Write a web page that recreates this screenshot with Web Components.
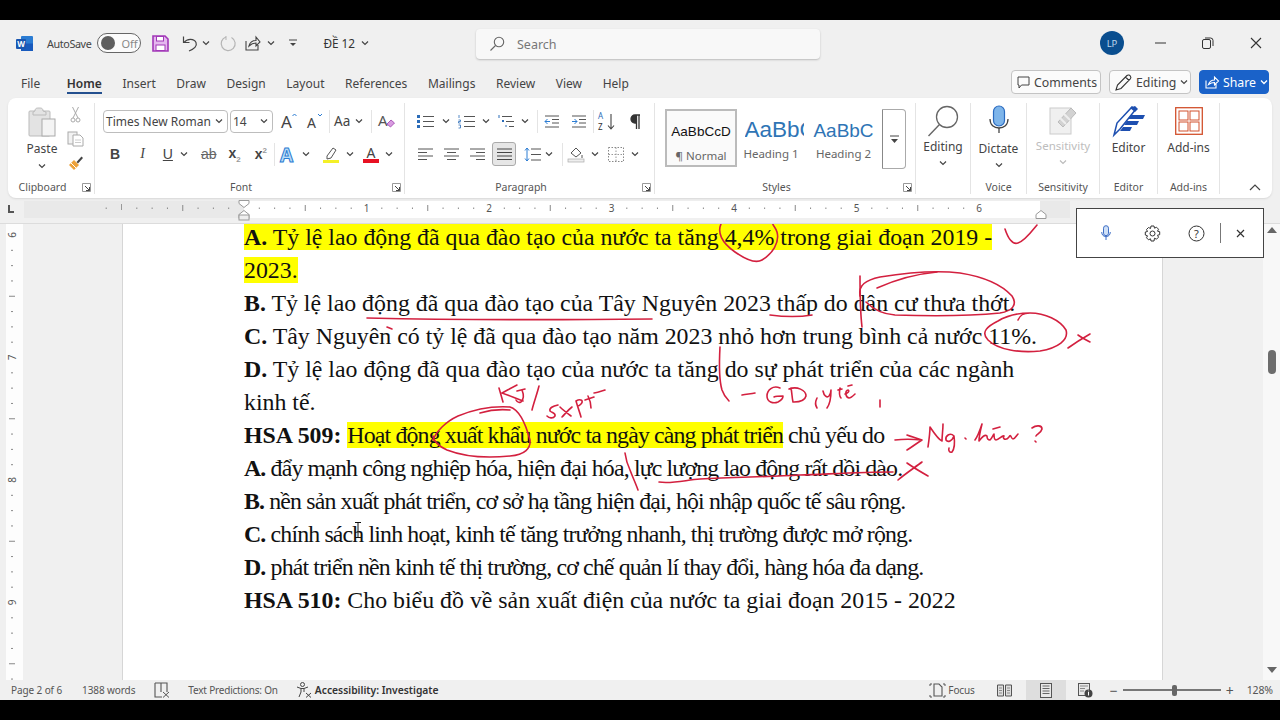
<!DOCTYPE html>
<html lang="vi">
<head>
<meta charset="utf-8">
<title>ĐỀ 12 - Word</title>
<style>
  html, body { margin: 0; height: 720px; overflow: hidden; background: #000; }
  body { padding: 20px 0; box-sizing: border-box; font-family: "Noto Sans", "Open Sans", sans-serif; }
  word-app { height: 680px; }
</style>
</head>
<body>
<word-app>
  <title-bar></title-bar>
  <tab-bar></tab-bar>
  <word-ribbon></word-ribbon>
  <h-ruler></h-ruler>
  <doc-view></doc-view>
  <status-bar></status-bar>
  <dictate-bar></dictate-bar>
</word-app>

<script>
// icons, drawn on their own pixel box
const ICONS = {
  chev: [8, 6, `<path d="M1 1.5 4 4.5 7 1.5" fill="none" stroke="#444" stroke-width="1.2"/>`],
  chevw: [8, 6, `<path d="M1 1.5 4 4.5 7 1.5" fill="none" stroke="#fff" stroke-width="1.3"/>`],
  chevg: [8, 6, `<path d="M1 1.5 4 4.5 7 1.5" fill="none" stroke="#bbb" stroke-width="1.2"/>`],
  word: [17, 17, `<rect x="5" y="1" width="12" height="15" rx="1" fill="#2b7cd3"/><rect x="5" y="8.5" width="12" height="7.5" fill="#185abd"/><rect x="0" y="4" width="10" height="10" rx="1" fill="#1a56b0"/><text x="5" y="12" font-size="8" font-weight="700" fill="#fff" text-anchor="middle" font-family="Noto Sans">W</text>`],
  save: [17, 17, `<path d="M1 1h12l3 3v12H1z" fill="#e4b8ee" stroke="#a238b8" stroke-width="1.6"/><rect x="4.5" y="1.5" width="7" height="4.5" fill="#fff" stroke="#a238b8"/><rect x="4" y="10" width="9" height="5.5" fill="#fff" stroke="#a238b8"/>`],
  undo: [16, 17, `<path d="M1.5 1.5v6h6M2 7.5C5 3.5 12 3 14 7.5 15.500 11 12 14 7 16" fill="none" stroke="#444" stroke-width="1.2"/>`],
  redo: [16, 17, `<path d="M11.500 2.500A7 7 0 1 1 6 2" fill="none" stroke="#b5b5b5" stroke-width="1.2"/><path d="M6 1v4" stroke="#b5b5b5"/>`],
  share: [16, 16, `<path d="M1 6v9h12v-5M4 11C5 7 8 5.500 11 5.500V2l4 5-4 4V8C8 8 6 9 4 11z" fill="none" stroke="#444" stroke-width="1.1"/>`],
  customize: [10, 8, `<path d="M1 1h8" stroke="#444"/><path d="M2 4h6L5 7z" fill="#444"/>`],
  search: [16, 16, `<circle cx="10" cy="6" r="4.700" fill="none" stroke="#666" stroke-width="1.1"/><path d="M6.500 9.500 1.500 14.500" stroke="#666" stroke-width="1.1"/>`],
  min: [12, 4, `<path d="M0 2h11" stroke="#333" stroke-width="1"/>`],
  restore: [12, 12, `<rect x=".5" y="2.500" width="8" height="9" rx="1.500" fill="none" stroke="#333"/><path d="M3 1h5.500a2.500 2.500 0 0 1 2.500 2.500V9" fill="none" stroke="#333"/>`],
  close: [12, 12, `<path d="M1 1l10 10M11 1 1 11" stroke="#333" stroke-width="1.1"/>`],
  comment: [13, 13, `<path d="M1 1h11v8H4.500L2 12V9H1z" fill="none" stroke="#444" stroke-width="1"/>`],
  pencil: [17, 17, `<path d="M1 16l1.500-5L12 1.500c1-1 2.500-.5 3.200.3.700.8 1 2 .1 3L6 14.500z M10.500 3l3.500 3.500" fill="none" stroke="#333" stroke-width="1.100"/>`],
  sharew: [14, 14, `<path d="M1 5.500V13h10V9M3.500 9.500C4.500 6.500 7 5 9.500 5V2l4 4-4 4V7.500c-2.500 0-4 .5-6 2z" fill="none" stroke="#fff" stroke-width="1.100"/>`],
  paste: [28, 30, `<rect x="1" y="4" width="21" height="25" rx="1" fill="#e3e3e3" stroke="#bbb"/><path d="M7 4c0-3 2-3 4-3s4 0 4 3l3 1v3H5V5z" fill="#e3e3e3" stroke="#bbb"/><rect x="14" y="12" width="13" height="17" fill="#f4f4f4" stroke="#aaa"/>`],
  cut: [11, 17, `<path d="M2.500 1 8 12M8.500 1 3 12" stroke="#aaa" fill="none"/><circle cx="3" cy="14" r="2" fill="none" stroke="#aaa"/><circle cx="8" cy="14" r="2" fill="none" stroke="#aaa"/>`],
  copy: [17, 16, `<rect x="1" y="1" width="9" height="12" fill="#f2f2f2" stroke="#aaa"/><path d="M6 4h7l3 3v8H6z" fill="#fff" stroke="#aaa"/><path d="M8 9h6M8 11.500h6" stroke="#ccc"/>`],
  painter: [16, 16, `<path d="M1 10l5-5 5 5-5 5z" fill="#eda23a"/><path d="M3 8l5 5" stroke="#fff"/><path d="M8.500 7 13.500 1.500l1.500 1.500-5 5.500z" fill="#444"/>`],
  launch: [9, 9, `<path d="M.5.5h8v8h-8z" fill="none" stroke="#999"/><path d="M3 3l4.500 4.500M7.500 4v3.500H4" fill="none" stroke="#444"/>`],
  grow: [16, 16, `<text x="0" y="15" font-size="17" fill="#444" font-family="Noto Sans">A</text><path d="M11.500 3 13.500 1 15.500 3" fill="none" stroke="#2b7cd3"/>`],
  shrink: [16, 16, `<text x="0" y="15" font-size="14" fill="#444" font-family="Noto Sans">A</text><path d="M11 1l2 2 2-2" fill="none" stroke="#2b7cd3"/>`],
  clearf: [17, 16, `<text x="0" y="13" font-size="15" fill="#555" font-family="Noto Sans">A</text><path d="M9 11l4-4 3.500 3-4 4z" fill="#d89be0" stroke="#9b3fa9" stroke-width=".8"/>`],
  texta: [17, 17, `<text x="8.500" y="15.500" text-anchor="middle" font-size="19" font-weight="700" fill="#bcdcf6" stroke="#2b7cd3" stroke-width="1" font-family="Noto Sans">A</text>`],
  hilite: [18, 17, `<path d="M5 10l6-8 3 2-5 8-4 1z" fill="#fff" stroke="#555"/><rect x="1" y="14" width="16" height="3" fill="#f4f028"/>`],
  fontc: [16, 17, `<text x="8" y="12" text-anchor="middle" font-size="14" fill="#444" font-family="Noto Sans">A</text><rect x="0" y="13" width="16" height="4" fill="#e81123"/>`],
  bullets: [17, 15, `<rect x="0" y="1" width="3" height="3" fill="#2b6cb8"/><rect x="0" y="6" width="3" height="3" fill="#2b6cb8"/><rect x="0" y="11" width="3" height="3" fill="#2b6cb8"/><path d="M6 2.500h11M6 7.500h11M6 12.500h11" stroke="#555"/>`],
  number: [17, 15, `<path d="M1 1v3M.5 6h2v1.500h-2V9h2M.5 11h2v3h-2" fill="none" stroke="#2b6cb8" stroke-width=".8"/><path d="M6 2.500h11M6 7.500h11M6 12.500h11" stroke="#555"/>`],
  multi: [17, 15, `<path d="M1 1v3" stroke="#2b6cb8"/><rect x="4" y="6" width="2" height="2" fill="#2b6cb8"/><path d="M8 13v-2" stroke="#2b6cb8"/><path d="M4 2.500h10M8 7.500h8M11 12.500h5" stroke="#555"/>`],
  outdent: [16, 13, `<path d="M1 1h14M8 4.500h7M8 8h7M1 12h14" stroke="#555"/><path d="M6 6.500H1M3.500 4 1 6.500 3.500 9" fill="none" stroke="#2b7cd3"/>`],
  indent: [16, 13, `<path d="M1 1h14M8 4.500h7M8 8h7M1 12h14" stroke="#555"/><path d="M1 6.500h5M3.500 4 6 6.500 3.500 9" fill="none" stroke="#2b7cd3"/>`],
  sort: [17, 17, `<text x="0" y="6" font-size="8" fill="#2b6cb8" font-family="Noto Sans">A</text><text x="0" y="17" font-size="8" fill="#333" font-family="Noto Sans">Z</text><path d="M13 1v15M10 12.500l3 3.500 3-3.500" fill="none" stroke="#444" stroke-width="1.1"/>`],
  pilcrow: [11, 15, `<path d="M10 1H5a3.500 3.500 0 0 0 0 8h1.500V1M9 1v14M6.500 9v6" fill="#333" stroke="#333" stroke-width="1.300"/>`],
  left: [15, 13, `<path d="M0 1h15M0 4.500h9M0 8h15M0 11.500h9" stroke="#555"/>`],
  center: [15, 13, `<path d="M0 1h15M3 4.500h9M0 8h15M3 11.500h9" stroke="#555"/>`],
  right: [15, 13, `<path d="M0 1h15M6 4.500h9M0 8h15M6 11.500h9" stroke="#555"/>`],
  justify: [15, 13, `<path d="M0 1h15M0 4.500h15M0 8h15M0 11.500h15" stroke="#444"/>`],
  spacing: [17, 15, `<path d="M3 1v13M1 3.500 3 1l2 2.500M1 11.500 3 14l2-2.500" fill="none" stroke="#2b7cd3"/><path d="M7 2h10M7 7.500h10M7 13h10" stroke="#555"/>`],
  shade: [17, 16, `<path d="M3 7l5-5 5 5-5 4z" fill="#fff" stroke="#555"/><path d="M14 9v3" stroke="#555"/><rect x="0" y="13" width="16" height="3" fill="#eee" stroke="#aaa" stroke-width=".7"/>`],
  border: [16, 15, `<rect x=".5" y=".5" width="15" height="14" fill="none" stroke="#888" stroke-dasharray="1.500 1.500"/><path d="M8 .5v14M.5 7.500h15" stroke="#999" stroke-dasharray="1.500 1.500"/>`],
  gscroll: [9, 9, `<path d="M0 1h9" stroke="#444"/><path d="M1 4h7L4.500 8z" fill="#444"/>`],
  bigsearch: [32, 32, `<circle cx="20" cy="12" r="10.500" fill="#fff" stroke="#666" stroke-width="1.300"/><path d="M12.500 19.500 1.500 31" stroke="#666" stroke-width="1.400"/>`],
  mic: [20, 30, `<path d="M1 14c0 6 4 9 9 9s9-3 9-9" fill="none" stroke="#444" stroke-width="1.300"/><rect x="4.500" y="1" width="11" height="20" rx="5.500" fill="#7eb5ea" stroke="#2a6bc0" stroke-width="1.200"/><path d="M10 23v5" stroke="#444" stroke-width="1.300"/>`],
  sens: [28, 30, `<rect x="1" y="3" width="21" height="26" fill="#f0f0f0" stroke="#ccc"/><path d="M9 17 22 3l5 5-13 14z" fill="#d2d2d2" stroke="#bbb"/><path d="M11 13l6 6M15 9l6 6" stroke="#eee" stroke-width="2"/>`],
  editor: [32, 31, `<path d="M1 30 4 18 19 2l4 2L7 24z" fill="#fff" stroke="#1d4fb0" stroke-width="1.500"/><path d="M17 3 22 1l3 3-3 3z" fill="#1d4fb0"/><path d="M18 10h14l-2 4H15zM14 16h12l-2 4H11zM10 22h9l-2 4H7z" fill="#1d4fb0"/>`],
  addins: [28, 28, `<rect x=".7" y=".7" width="26.600" height="26.600" fill="#fff" stroke="#d2512d" stroke-width="1.300"/><rect x="4" y="4" width="9" height="9" fill="none" stroke="#d2512d"/><rect x="15" y="4" width="9" height="9" fill="none" stroke="#d2512d"/><rect x="4" y="15" width="9" height="9" fill="none" stroke="#d2512d"/><rect x="15" y="15" width="9" height="9" fill="none" stroke="#d2512d"/>`],
  collapse: [12, 7, `<path d="M1 6 6 1l5 5" fill="none" stroke="#444" stroke-width="1.200"/>`],
  proof: [16, 16, `<path d="M1 1h12v9M1 1v14h7M7 1v9" fill="none" stroke="#555" stroke-width="1.100"/><path d="M9 10l6 5.500M15 10l-6 5.500" stroke="#555"/>`],
  access: [16, 16, `<circle cx="6.500" cy="2.500" r="2" fill="none" stroke="#444"/><path d="M1 5l4 1.500h3L12 5M5 6.500V10L3 15M8 6.500V10" fill="none" stroke="#444"/><path d="M10 11l5 4.500M15 11l-5 4.500" stroke="#444"/>`],
  focus: [15, 15, `<path d="M0 3V1h2M13 1h2v2M0 12v2h2M13 14h2v-2" fill="none" stroke="#555"/><path d="M4 1h5l3 3v9H4z" fill="none" stroke="#555" stroke-width="1.100"/>`],
  read: [15, 13, `<path d="M.5 1h6v11h-6zM8.500 1h6v11h-6z" fill="#ddd" stroke="#555"/><path d="M2 4h3M2 6.500h3M2 9h3M10 4h3M10 6.500h3M10 9h3" stroke="#666" stroke-width=".7"/>`],
  print: [12, 15, `<rect x=".5" y=".5" width="11" height="14" fill="#e8e8e8" stroke="#555"/><path d="M2.500 3h7M2.500 5.500h7M2.500 8h7M2.500 10.500h7" stroke="#666"/>`],
  web: [15, 15, `<rect x=".5" y=".5" width="11" height="12" fill="#e8e8e8" stroke="#555"/><path d="M2 3h8M2 5.500h5M2 8h4" stroke="#888"/><circle cx="10.500" cy="10.500" r="4" fill="#444"/><path d="M10.500 9v3.500M10.500 7.700v.6" stroke="#fff"/>`],
  micb: [10, 16, `<rect x="2.500" y=".7" width="5" height="10" rx="2.500" fill="#cfe0f7" stroke="#3f6fc6"/><path d="M.7 7c0 3 2 4.700 4.300 4.700S9.300 10 9.300 7M5 11.700V15" fill="none" stroke="#3f6fc6"/>`],
  gear: [17, 17, `<circle cx="8.500" cy="8.500" r="2.500" fill="none" stroke="#333"/><path d="M7 1h3l.5 2.200 2-1 2 2-1 2 2.200.5v3l-2.200.5 1 2-2 2-2-1L10 16H7l-.5-2.200-2 1-2-2 1-2L1.300 10V7l2.200-.5-1-2 2-2 2 1z" fill="none" stroke="#333"/>`],
  help: [17, 17, `<circle cx="8.500" cy="8.500" r="7.500" fill="none" stroke="#333"/><text x="8.500" y="12.500" text-anchor="middle" font-size="11" fill="#333" font-family="Noto Sans">?</text>`],
  xs: [9, 9, `<path d="M1 1l7 7M8 1 1 8" stroke="#333" stroke-width="1.200"/>`],
  ibeam: [8, 16, `<path d="M1 .5h6M4 .5v15M1 15.500h6" stroke="#111"/>`]
};

class UiIcon extends HTMLElement {
  connectedCallback() {
    let [w, h, body] = ICONS[this.getAttribute('name')];
    this.attachShadow({mode: 'open'}).innerHTML = `
      <style>:host { display: inline-flex; flex: none; } svg { display: block; overflow: visible; }</style>
      <svg width="${w}" height="${h}" viewBox="0 0 ${w} ${h}">${body}</svg>`;
  }
}
customElements.define('ui-icon', UiIcon);

class WordApp extends HTMLElement {
  constructor() {
    super();
    this.attachShadow({mode: 'open'}).innerHTML = `
      <style>
        :host { display: flex; flex-direction: column; position: relative; background: #f0f0f0; color: #444; overflow: hidden; }
      </style>
      <slot></slot>`;
  }
}
customElements.define('word-app', WordApp);

class TitleBar extends HTMLElement {
  constructor() {
    super();
    this.attachShadow({mode: 'open'}).innerHTML = `
      <style>
        :host { display: flex; height: 46px; flex: none; align-items: center; font-size: 10.800px; letter-spacing: -.4px; color: #444; }
        .toggle { width: 42px; height: 18px; border: 1px solid #666; border-radius: 11px; display: flex; align-items: center; margin-left: 6px; background: #fbfbfb; color: #888; font-size: 11px; letter-spacing: 0; }
        .knob { width: 14px; height: 14px; border-radius: 50%; background: #5f5f5f; margin: 0 6px 0 3px; }
        .name { font-size: 11.800px; letter-spacing: 0; color: #333; }
        .search { width: 344px; height: 30px; box-sizing: border-box; background: #f8f8f8; border-radius: 4px; box-shadow: 0 1px 2px #bbb; display: flex; align-items: center; padding-left: 13px; color: #777; font-size: 12.500px; letter-spacing: 0; position: absolute; left: 476px; top: 9px; }
        .search span { margin-left: 12px; }
        .avatar { width: 24px; height: 24px; border-radius: 50%; background: #0a4e8f; color: #b9d3ea; font-size: 9.500px; letter-spacing: 0; display: flex; align-items: center; justify-content: center; }
        .spacer { flex: 1; }
      </style>
      <ui-icon name="word" style="margin-left:16px"></ui-icon>
      <span style="margin-left:14px">AutoSave</span>
      <div class="toggle"><div class="knob"></div>Off</div>
      <ui-icon name="save" style="margin-left:11px"></ui-icon>
      <ui-icon name="undo" style="margin-left:13px"></ui-icon>
      <ui-icon name="chev" style="margin-left:4px"></ui-icon>
      <ui-icon name="redo" style="margin-left:10px"></ui-icon>
      <ui-icon name="share" style="margin-left:9px"></ui-icon>
      <ui-icon name="chev" style="margin-left:6px"></ui-icon>
      <ui-icon name="customize" style="margin-left:13px"></ui-icon>
      <span class="name" style="margin-left:25px">ĐỀ 12</span>
      <ui-icon name="chev" style="margin-left:6px"></ui-icon>
      <div class="search"><ui-icon name="search"></ui-icon><span>Search</span></div>
      <div class="spacer"></div>
      <div class="avatar">LP</div>
      <ui-icon name="min" style="margin-left:31px"></ui-icon>
      <ui-icon name="restore" style="margin-left:35px"></ui-icon>
      <ui-icon name="close" style="margin-left:36px;margin-right:18px"></ui-icon>`;
  }
}
customElements.define('title-bar', TitleBar);

class TabBar extends HTMLElement {
  constructor() {
    super();
    this.attachShadow({mode: 'open'}).innerHTML = `
      <style>
        :host { display: flex; height: 32px; flex: none; align-items: center; padding-left: 21px; font-size: 12px; color: #444; position: relative; }
        .tabs { display: flex; gap: 20.600px; flex: 1; padding-top: 2px; }
        .on { font-weight: 600; color: #333; position: relative; margin-left: 6px; }
        .on::after { content: ""; position: absolute; left: 0; right: 0; bottom: -2px; height: 2px; background: #24508f; }
        .btn { height: 24px; box-sizing: border-box; border: 1px solid #c4c4c4; border-radius: 4px; background: #fbfbfb; display: flex; align-items: center; gap: 4px; padding: 0 5px; color: #444; font-size: 12.300px; }
        .share { background: #1a62c9; border-color: #1a62c9; color: #fff; }
      </style>
      <div class="tabs">
        <span>File</span><span class="on">Home</span><span>Insert</span><span>Draw</span><span>Design</span><span>Layout</span><span>References</span><span>Mailings</span><span>Review</span><span>View</span><span>Help</span>
      </div>
      <div class="btn" style="width:90px;margin-right:8px"><ui-icon name="comment"></ui-icon>Comments</div>
      <div class="btn" style="width:82px;margin-right:8px"><ui-icon name="pencil"></ui-icon>Editing<ui-icon name="chev"></ui-icon></div>
      <div class="btn share" style="width:70px;margin-right:11px"><ui-icon name="sharew"></ui-icon>Share<ui-icon name="chevw"></ui-icon></div>`;
  }
}
customElements.define('tab-bar', TabBar);

class RibbonGroup extends HTMLElement {
  constructor() {
    super();
    this.attachShadow({mode: 'open'}).innerHTML = `
      <style>
        :host { display: flex; flex-direction: column; flex: none; box-sizing: border-box; border-right: 1px solid #e4e4e4; margin: 5px 0 4px; position: relative; }
        .body { flex: 1; min-height: 0; display: flex; }
        .foot { height: 14px; display: flex; align-items: center; font-size: 10.500px; color: #555; }
        #lb { flex: 1; text-align: center; }
        .launch { width: 17px; display: flex; flex: none; justify-content: flex-end; padding-right: 3px; box-sizing: border-box; }
      </style>
      <div class="body"><slot></slot></div>
      <div class="foot"><span id="lb"></span><span class="launch" id="lc"></span></div>`;
  }
  connectedCallback() {
    let root = this.shadowRoot;
    root.getElementById('lb').textContent = this.getAttribute('label') || '';
    if (this.hasAttribute('launcher')) {
      root.getElementById('lc').innerHTML = '<ui-icon name="launch"></ui-icon>';
    } else {
      root.getElementById('lc').style.display = 'none';
    }
  }
}
customElements.define('ribbon-group', RibbonGroup);

class BigButton extends HTMLElement {
  constructor() {
    super();
    this.attachShadow({mode: 'open'}).innerHTML = `
      <style>
        :host { display: flex; flex: 1; flex-direction: column; align-items: center; font-size: 12px; color: #444; }
        .ic { display: flex; align-items: center; justify-content: center; }
        .t { line-height: 16px; white-space: nowrap; }
        :host([dim]) { color: #bdbdbd; font-size: 11.500px; }
      </style>
      <div class="ic"><slot></slot></div>
      <div class="t" id="t"></div>
      <div id="c" style="display:flex;margin-top:5px"></div>`;
  }
  connectedCallback() {
    let root = this.shadowRoot;
    root.getElementById('t').textContent = this.getAttribute('text');
    root.getElementById('t').style.marginTop = (this.getAttribute('gap') || 3) + 'px';
    if (this.hasAttribute('chev')) {
      let kind = this.hasAttribute('dim') ? 'chevg' : 'chev';
      root.getElementById('c').innerHTML = `<ui-icon name="${kind}"></ui-icon>`;
    }
    this.style.paddingTop = (this.getAttribute('top') || 2) + 'px';
  }
}
customElements.define('big-button', BigButton);

class ToolRow extends HTMLElement {
  constructor() {
    super();
    this.attachShadow({mode: 'open'}).innerHTML = `
      <style>
        :host { display: flex; align-items: center; height: 24px; color: #444; }
      </style>
      <slot></slot>`;
  }
}
customElements.define('tool-row', ToolRow);

class FontSelect extends HTMLElement {
  constructor() {
    super();
    this.attachShadow({mode: 'open'}).innerHTML = `
      <style>
        :host { display: flex; align-items: center; height: 23px; box-sizing: border-box; border: 1px solid #bdbdbd; border-radius: 4px; padding: 0 4px 0 2px; font-size: 12px; color: #444; font-family: "Noto Sans", sans-serif; justify-content: space-between; background: #fff; }
      </style>
      <slot></slot><ui-icon name="chev"></ui-icon>`;
  }
}
customElements.define('font-select', FontSelect);

class StyleGallery extends HTMLElement {
  constructor() {
    super();
    this.attachShadow({mode: 'open'}).innerHTML = `
      <style>
        :host { display: flex; width: 241px; height: 60px; box-sizing: border-box; margin: 6px 0 0 10px; }
        .cells { display: flex; width: 217px; }
        .cell { display: flex; flex-direction: column; align-items: center; height: 58px; box-sizing: border-box; padding-top: 6px; overflow: hidden; white-space: nowrap; }
        .n { width: 72px; border: 2px solid #bbb; background: #fafafa; }
        .s { height: 28px; line-height: 28px; color: #2e74b5; font-family: "Liberation Sans", sans-serif; }
        .l { font-size: 11.500px; color: #666; line-height: 18px; margin-top: 2px; }
        .more { width: 24px; height: 60px; box-sizing: border-box; border: 1px solid #aaa; border-left: 1px solid #888; border-radius: 0 4px 4px 0; display: flex; align-items: center; justify-content: center; }
      </style>
      <div class="cells">
        <div class="cell n"><div class="s" style="color:#111;font-size:13.500px;margin-top:1px;height:27px">AaBbCcD</div><div class="l">¶ Normal</div></div>
        <div class="cell" style="width:68px"><div class="s" style="font-size:22.500px;margin:3px 0 0 6px;height:25px;width:59px;overflow:hidden;line-height:24px">AaBbC</div><div class="l">Heading 1</div></div>
        <div class="cell" style="width:77px"><div class="s" style="font-size:19px;margin-top:3px;height:25px;line-height:25px">AaBbC</div><div class="l">Heading 2</div></div>
      </div>
      <div class="more"><ui-icon name="gscroll"></ui-icon></div>`;
  }
}
customElements.define('style-gallery', StyleGallery);

class WordRibbon extends HTMLElement {
  constructor() {
    super();
    // small tools use inline margins so the x positions line up with the reference
    const tool = (name, ml) => `<ui-icon name="${name}" style="margin-left:${ml}px"></ui-icon>`;
    const txt = (s, ml, extra) => `<span style="margin-left:${ml}px;${extra||''}">${s}</span>`;
    this.attachShadow({mode: 'open'}).innerHTML = `
      <style>
        :host { display: flex; flex: none; height: 100px; margin: 0 8px; background: #fff; border-radius: 8px; box-shadow: 0 1px 2px #d8d8d8; position: relative; box-sizing: border-box; }
        .two { display: flex; flex-direction: column; gap: 9px; padding-top: 6px; }
        .sep { width: 1px; height: 23px; background: #e4e4e4; }
        .sm { display: flex; flex-direction: column; align-items: center; gap: 8px; }
        .pasteb { width: 50px; margin-left: 9px; display: flex; flex-direction: column; align-items: center; font-size: 12px; color: #444; padding-top: 4px; }
        .jbox { width: 24px; height: 24px; box-sizing: border-box; background: #e6e6e6; border: 1px solid #aaa; border-radius: 3px; display: flex; align-items: center; justify-content: center; }
        .collapse { position: absolute; right: 11px; bottom: 7px; display: flex; }
      </style>
      <ribbon-group label="Clipboard" launcher style="width:87px">
        <div class="pasteb"><ui-icon name="paste"></ui-icon><span style="margin-top:3px">Paste</span><ui-icon name="chev" style="margin-top:6px"></ui-icon></div>
        <div class="sm" style="margin-left:0;width:17px;padding-top:3px"><ui-icon name="cut"></ui-icon><ui-icon name="copy"></ui-icon><ui-icon name="painter"></ui-icon></div>
      </ribbon-group>

      <ribbon-group label="Font" launcher style="width:310px">
        <div class="two">
          <tool-row>
            <font-select style="width:125px;margin-left:8px">Times New Roman</font-select>
            <font-select style="width:43px;margin-left:2px">14</font-select>
            ${tool('grow',8)}${tool('shrink',10)}
            <div class="sep" style="margin-left:6px"></div>
            ${txt('Aa',4,'font-size:13.500px')}${tool('chev',5)}
            <div class="sep" style="margin-left:8px"></div>
            ${tool('clearf',6)}
          </tool-row>
          <tool-row style="font-family:'Liberation Sans',sans-serif;font-size:14px;color:#444">
            ${txt('B',15,'font-weight:700')}
            ${txt('I',20,'font-family:Liberation Serif;font-style:italic')}
            ${txt('U',18,'text-decoration:underline')}
            ${tool('chev',7)}
            ${txt('ab',13,'text-decoration:line-through;color:#666')}
            ${txt('x<sub style="font-size:8px;color:#999">2</sub>',12,'font-weight:600')}
            ${txt('x<sup style="font-size:8px;color:#999;line-height:0">2</sup>',14,'font-weight:600')}
            <div class="sep" style="margin-left:7px"></div>
            ${tool('texta',3)}${tool('chev',7)}
            ${tool('hilite',12)}${tool('chev',6)}
            ${tool('fontc',9)}${tool('chev',6)}
          </tool-row>
        </div>
      </ribbon-group>

      <ribbon-group label="Paragraph" launcher style="width:250px">
        <div class="two">
          <tool-row>
            ${tool('bullets',12)}${tool('chev',8)}${tool('number',8)}${tool('chev',7)}${tool('multi',8)}${tool('chev',6)}
            <div class="sep" style="margin-left:8px"></div>
            ${tool('outdent',6)}${tool('indent',11)}
            <div class="sep" style="margin-left:6px"></div>
            ${tool('sort',4)}${tool('pilcrow',15)}
          </tool-row>
          <tool-row>
            ${tool('left',13)}${tool('center',11)}${tool('right',11)}
            <div class="jbox" style="margin-left:7px"><ui-icon name="justify"></ui-icon></div>
            ${tool('spacing',8)}${tool('chev',4)}
            <div class="sep" style="margin-left:9px"></div>
            ${tool('shade',5)}${tool('chev',6)}${tool('border',9)}${tool('chev',7)}
          </tool-row>
        </div>
      </ribbon-group>

      <ribbon-group label="Styles" launcher style="width:261px">
        <style-gallery></style-gallery>
      </ribbon-group>

      <ribbon-group style="width:55px">
        <big-button text="Editing" chev gap="2"><ui-icon name="bigsearch"></ui-icon></big-button>
      </ribbon-group>
      <ribbon-group label="Voice" style="width:56px">
        <big-button text="Dictate" chev gap="6"><ui-icon name="mic"></ui-icon></big-button>
      </ribbon-group>
      <ribbon-group label="Sensitivity" style="width:73px">
        <big-button text="Sensitivity" dim chev gap="3"><ui-icon name="sens"></ui-icon></big-button>
      </ribbon-group>
      <ribbon-group label="Editor" style="width:58px">
        <big-button text="Editor" gap="4"><ui-icon name="editor"></ui-icon></big-button>
      </ribbon-group>
      <ribbon-group label="Add-ins" style="width:62px">
        <big-button text="Add-ins" gap="5" top="4"><ui-icon name="addins"></ui-icon></big-button>
      </ribbon-group>
      <div class="collapse"><ui-icon name="collapse"></ui-icon></div>`;
  }
}
customElements.define('word-ribbon', WordRibbon);

const INCH = 122.5;

class HRuler extends HTMLElement {
  constructor() {
    super();
    let marks = '';
    for (let i = -9; i <= 48; i++) {
      let x = 244 + i * INCH / 8;
      if (i % 8 === 0) {
        if (i > 0) marks += `<text x="${x}" y="14" font-size="10" fill="#555" text-anchor="middle" font-family="Noto Sans">${i / 8}</text>`;
        else if (i < 0) marks += `<path d="M${x} 6v6" stroke="#999"/>`;
      } else if (i % 4 === 0) {
        marks += `<path d="M${x} 7v6" stroke="#888"/>`;
      } else {
        marks += `<path d="M${x} 9.500v1.500" stroke="#888"/>`;
      }
    }
    this.attachShadow({mode: 'open'}).innerHTML = `
      <style>
        :host { display: block; height: 26px; flex: none; background: #f0f0f0; border-bottom: 1px solid #dcdcdc; box-sizing: border-box; }
        svg { display: block; }
      </style>
      <svg width="1280" height="25" viewBox="0 0 1280 25">
        <path d="M8 7h2v6h4v2H8z" fill="#555"/>
        <rect x="24" y="3" width="1046" height="17" fill="#e9e9e9"/>
        <rect x="244" y="3" width="796" height="17" fill="#fff"/>
        ${marks}
        <path d="M239 2.500h10v3l-5 4-5-4z" fill="#fff" stroke="#999"/>
        <path d="M239 20.500v-4l5-4 5 4v4z" fill="#fff" stroke="#999"/>
        <rect x="239" y="17" width="10" height="5" fill="#eee" stroke="#999"/>
        <path d="M1036 20.500v-4l5-4 5 4v4z" fill="#fff" stroke="#999"/>
      </svg>`;
  }
}
customElements.define('h-ruler', HRuler);

class VRuler extends HTMLElement {
  constructor() {
    super();
    let marks = '';
    // inch 6 sits at y 234 in the window, the doc view starts at 224
    for (let i = -1; i < 32; i++) {
      let y = 11 + i * INCH / 8;
      if (y < 0 || y > 456) continue;
      if (i % 8 === 0) {
        marks += `<text transform="translate(16,${y}) rotate(-90)" font-size="10" fill="#555" text-anchor="middle" font-family="Noto Sans">${6 + i / 8}</text>`;
      } else if (i % 4 === 0) {
        marks += `<path d="M9 ${y}h6" stroke="#888"/>`;
      } else {
        marks += `<path d="M11 ${y}h2" stroke="#888"/>`;
      }
    }
    this.attachShadow({mode: 'open'}).innerHTML = `
      <style>
        :host { display: block; width: 24px; flex: none; background: #f0f0f0; }
        svg { display: block; }
      </style>
      <svg width="24" height="456" viewBox="0 0 24 456">
        <rect x="6" y="0" width="17" height="456" fill="#fdfdfd"/>
        ${marks}
      </svg>`;
  }
}
customElements.define('v-ruler', VRuler);

class DocPage extends HTMLElement {
  constructor() {
    super();
    this.attachShadow({mode: 'open'}).innerHTML = `
      <style>
        :host { display: block; width: 1041px; flex: none; background: #fff; box-sizing: border-box; border-left: 1px solid #d6d6d6; border-right: 1px solid #d6d6d6; padding-left: 121px; font: 23.850px/33px "Liberation Serif", "Times New Roman", serif; color: #111; overflow: hidden; }
        .txt { margin-top: -3px; }
        p { margin: 0; white-space: nowrap; height: 33px; }
        mark { background: #ffff00; color: inherit; }
        .t { letter-spacing: -.85px; }
      </style>
      <div class="txt">
        <p><mark><b>A.</b> Tỷ lệ lao động đã qua đào tạo của nước ta tăng 4,4% trong giai đoạn 2019 -</mark></p>
        <p><mark>2023.</mark></p>
        <p><b>B.</b> Tỷ lệ lao động đã qua đào tạo của Tây Nguyên 2023 thấp do dân cư thưa thớt.</p>
        <p><b>C.</b> Tây Nguyên có tỷ lệ đã qua đào tạo năm 2023 nhỏ hơn trung bình cả nước 11%.</p>
        <p><b>D.</b> Tỷ lệ lao động đã qua đào tạo của nước ta tăng do sự phát triển của các ngành</p>
        <p>kinh tế.</p>
        <p><b>HSA 509:</b> <span class="t"><mark>Hoạt động xuất khẩu nước ta ngày càng phát triển</mark> chủ yếu do</span></p>
        <p class="t"><b>A.</b> đẩy mạnh công nghiệp hóa, hiện đại hóa, lực lượng lao động rất dồi dào.</p>
        <p class="t"><b>B.</b> nền sản xuất phát triển, cơ sở hạ tầng hiện đại, hội nhập quốc tế sâu rộng.</p>
        <p class="t"><b>C.</b> chính sách linh hoạt, kinh tế tăng trưởng nhanh, thị trường được mở rộng.</p>
        <p class="t"><b>D.</b> phát triển nền kinh tế thị trường, cơ chế quản lí thay đổi, hàng hóa đa dạng.</p>
        <p><b>HSA 510:</b> Cho biểu đồ về sản xuất điện của nước ta giai đoạn 2015 - 2022</p>
      </div>`;
  }
}
customElements.define('doc-page', DocPage);

// pen strokes drawn over the page, in window coordinates shifted to the doc view
class InkLayer extends HTMLElement {
  constructor() {
    super();
    const strokes = [
      // circle 4,4%
      'M722 222C716 232 722 243 735 252 745 259 755 264 762 260 772 254 780 243 777 232 776 228 773 226 772 222',
      // check
      'M1005 229C1008 238 1012 245 1018 243 1025 241 1032 231 1037 225',
      // dân cư thưa thớt
      'M860 276C860 295 860 310 862 327',
      'M860 296C858 285 866 280 880 277 905 273 935 270 960 273 985 277 1002 285 1012 296 1018 305 1012 311 1000 313 970 316 925 316 895 315 880 314 872 308 866 302',
      'M877 288C895 280 915 274 937 272',
      // underlines
      'M770 315C785 317 800 317 812 315',
      'M367 318C460 320 560 320 652 319',
      'M387 327 392 329',
      // 11%
      'M1018 320C1020 315 1023 313 1030 313 1045 313 1060 320 1066 330 1069 340 1058 348 1040 351 1020 353 998 350 988 340 980 332 988 326 998 321 1008 315 1020 313 1030 313',
      'M1068 348C1075 343 1083 338 1090 334M1078 335C1082 338 1086 340 1090 342',
      // do sự
      'M720 347C719 365 719 380 722 390 724 396 727 399 729 401',
      // - GD, yte
      'M742 395C747 394 751 394 755 393',
      'M780 388C773 385 767 390 767 396 767 402 773 404 778 402 782 400 783 398 783 396 779 396 776 396 774 397',
      'M791 388C792 393 792 398 793 402M789 389C797 386 806 390 806 396 805 400 800 402 794 402',
      'M817 398C815 402 815 405 817 408',
      'M823 391C824 396 827 398 829 396 831 393 831 391 831 390 831 398 830 404 827 408',
      'M838 390 842 389M840 388C839 393 839 396 841 398M845 394C848 393 850 391 848 390 845 390 845 397 849 398 851 398 853 396 855 394',
      'M848 386 852 385',
      'M880 400 880 407',
      // KJ / sx pt
      'M499 388 503 402M517 385C511 388 506 391 502 393 508 395 515 398 523 401',
      'M517 391 525 389M522 390C524 395 524 399 521 402 519 403 517 402 516 400',
      'M539 386C537 394 534 402 532 410',
      'M558 405C553 406 549 408 550 411 552 413 556 413 555 416 553 419 549 418 547 416',
      'M560 407C563 410 567 413 571 416M572 407C568 410 565 414 562 417',
      'M576 401C578 408 580 413 581 417M576 401C581 398 584 401 581 404 580 405 579 406 578 406',
      'M588 396C590 400 591 405 591 408M585 400 594 397M594 393C596 393 599 392 605 390',
      // xuất khẩu
      'M433 440C436 432 445 422 458 416 475 409 495 406 510 407 520 410 526 425 530 440 531 448 525 455 510 456 490 458 465 457 447 450 438 446 434 441 433 436',
      'M480 413C490 410 500 409 510 410',
      // arrow
      'M895 440C903 439 912 439 922 440M907 435C912 437 917 438 922 440 917 443 912 447 907 450',
      // Ng. nhiễn ?
      'M928 447C929 440 930 433 930 427 934 433 939 440 942 441 942 436 943 430 943 424',
      'M954 436C950 432 945 436 946 440 948 443 952 441 954 436 955 443 955 448 952 452 950 453 948 451 949 448',
      'M965 438 966 439',
      'M975 440C978 436 980 430 982 424 980 432 979 438 979 441 982 437 985 434 987 436 987 438 987 440 990 440 992 438 993 435 994 434 994 437 994 440 996 440 999 440 1002 435 1004 436 1002 439 1006 441 1009 437 1011 433 1011 439 1013 439 1015 439 1016 436 1018 434',
      'M993 429 1000 427',
      'M1032 428C1036 425 1042 425 1042 429 1041 433 1037 434 1036 436M1035 441 1036 442',
      // lực lượng line
      'M659 482C672 484 686 480 700 479 735 477 765 477 800 475 830 474 860 472 893 472',
      'M625 453C626 460 628 466 630 470 633 478 636 484 638 490',
      // x
      'M898 480C905 474 914 468 922 462M907 463C914 468 921 472 928 476'
    ];
    let paths = strokes.map(d => `<path d="${d}"/>`).join('');
    this.attachShadow({mode: 'open'}).innerHTML = `
      <style>
        :host { position: absolute; left: 0; top: 0; width: 1280px; height: 456px; pointer-events: none; }
        svg { display: block; }
        .cursor { position: absolute; left: 354px; top: 298px; }
      </style>
      <svg width="1280" height="456" viewBox="0 224 1280 456" fill="none" stroke="#d3203f" stroke-width="1.600" stroke-linecap="round" stroke-linejoin="round">${paths}</svg>
      <ui-icon class="cursor" name="ibeam"></ui-icon>`;
  }
}
customElements.define('ink-layer', InkLayer);

class ScrollRail extends HTMLElement {
  constructor() {
    super();
    this.attachShadow({mode: 'open'}).innerHTML = `
      <style>
        :host { display: flex; flex-direction: column; align-items: center; width: 17px; flex: none; background: #f8f8f8; }
        .thumb { width: 8px; height: 24px; border-radius: 4px; background: #6d6d6d; margin-top: 117px; }
        .up, .down { width: 0; height: 0; border-left: 5px solid transparent; border-right: 5px solid transparent; }
        .up { border-bottom: 6px solid #666; margin-top: 3px; }
        .down { border-top: 6px solid #666; margin-bottom: 7px; }
        .sp { flex: 1; }
      </style>
      <div class="up"></div><div class="thumb"></div><div class="sp"></div><div class="down"></div>`;
  }
}
customElements.define('scroll-rail', ScrollRail);

class DocView extends HTMLElement {
  constructor() {
    super();
    this.attachShadow({mode: 'open'}).innerHTML = `
      <style>
        :host { display: flex; height: 456px; flex: none; background: #f0f0f0; position: relative; overflow: hidden; }
        .gut { flex: 1; }
      </style>
      <v-ruler></v-ruler>
      <div style="width:98px;flex:none"></div>
      <doc-page></doc-page>
      <div class="gut"></div>
      <scroll-rail></scroll-rail>
      <ink-layer></ink-layer>`;
  }
}
customElements.define('doc-view', DocView);

class StatusBar extends HTMLElement {
  constructor() {
    super();
    this.attachShadow({mode: 'open'}).innerHTML = `
      <style>
        :host { display: flex; align-items: center; height: 20px; flex: none; font-size: 10px; letter-spacing: -.1px; color: #555; background: #f0f0f0; padding-left: 11px; white-space: nowrap; }
        .print { width: 40px; height: 20px; background: #dedede; display: flex; align-items: center; justify-content: center; margin-left: 14px; }
        .track { width: 98px; height: 2px; background: #777; margin-left: 5px; display: flex; justify-content: center; align-items: center; }
        .thumb { width: 5px; height: 11px; background: #666; border-radius: 2px; margin-left: 5px; }
        .sp { flex: 1; }
      </style>
      <span>Page 2 of 6</span>
      <span style="margin-left:20px">1388 words</span>
      <ui-icon name="proof" style="margin-left:19px"></ui-icon>
      <span style="margin-left:18px;letter-spacing:-.2px">Text Predictions: On</span>
      <ui-icon name="access" style="margin-left:18px"></ui-icon>
      <b style="margin-left:3px;color:#333;font-weight:600;font-size:10.300px;letter-spacing:0">Accessibility: Investigate</b>
      <div class="sp"></div>
      <ui-icon name="focus"></ui-icon>
      <span style="margin-left:3px">Focus</span>
      <ui-icon name="read" style="margin-left:22px"></ui-icon>
      <div class="print"><ui-icon name="print"></ui-icon></div>
      <ui-icon name="web" style="margin-left:12px"></ui-icon>
      <span style="margin-left:17px;font-size:14px">−</span>
      <div class="track"><div class="thumb"></div></div>
      <span style="margin-left:5px;font-size:14px">+</span>
      <span style="margin-left:13px;margin-right:7px;font-size:10.500px">128%</span>`;
  }
}
customElements.define('status-bar', StatusBar);

class DictateBar extends HTMLElement {
  constructor() {
    super();
    this.attachShadow({mode: 'open'}).innerHTML = `
      <style>
        :host { position: absolute; left: 1076px; top: 188px; width: 188px; height: 50px; box-sizing: border-box; background: #fff; border: 1px solid #444; display: flex; align-items: center; }
        .sep { width: 1px; height: 20px; background: #777; margin-left: 15px; }
      </style>
      <ui-icon name="micb" style="margin-left:24px"></ui-icon>
      <ui-icon name="gear" style="margin-left:33px"></ui-icon>
      <ui-icon name="help" style="margin-left:27px"></ui-icon>
      <div class="sep"></div>
      <ui-icon name="xs" style="margin-left:15px"></ui-icon>`;
  }
}
customElements.define('dictate-bar', DictateBar);
</script>
</body>
</html>
